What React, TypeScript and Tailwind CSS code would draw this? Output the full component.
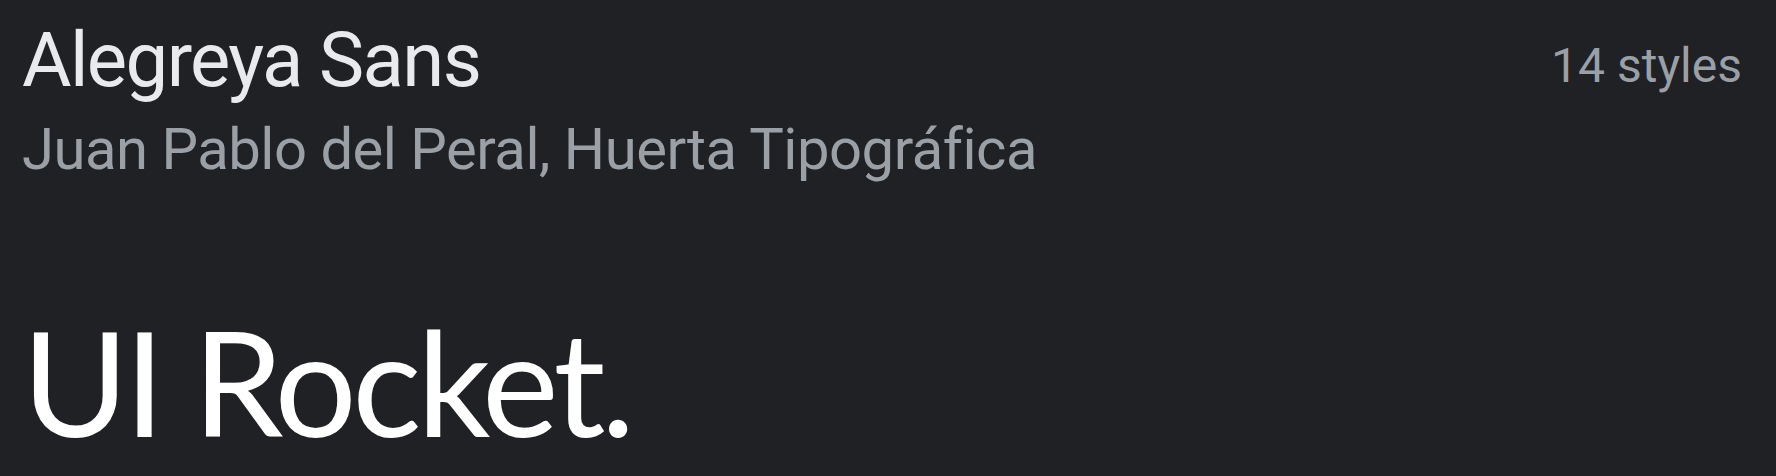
export default function App() {
  return (
    <div className="w-[1776px] h-[476px] bg-[#202124] overflow-hidden px-[22px] pt-[16px]">
      <div className="flex items-start justify-between">
        <div className="flex flex-col">
          <h1 className="text-[76px] leading-[88px] text-[#e8eaed] font-['Roboto',sans-serif] tracking-[-1.6px]">
            Alegreya Sans
          </h1>
          <p className="mt-[10px] text-[58px] leading-[70px] text-[#9aa0a6] font-['Roboto',sans-serif] tracking-[-0.5px]">
            Juan Pablo del Peral, Huerta Tipográfica
          </p>
        </div>
        <span className="mt-[6px] text-[48px] leading-[88px] text-[#9aa0a6] font-['Roboto',sans-serif] pr-[12px]">
          14 styles
        </span>
      </div>
      <div className="mt-[122px] text-[145px] leading-[150px] text-white font-['Lato',sans-serif] tracking-[-4.5px]">
        UI Rocket.
      </div>
    </div>
  );
}
